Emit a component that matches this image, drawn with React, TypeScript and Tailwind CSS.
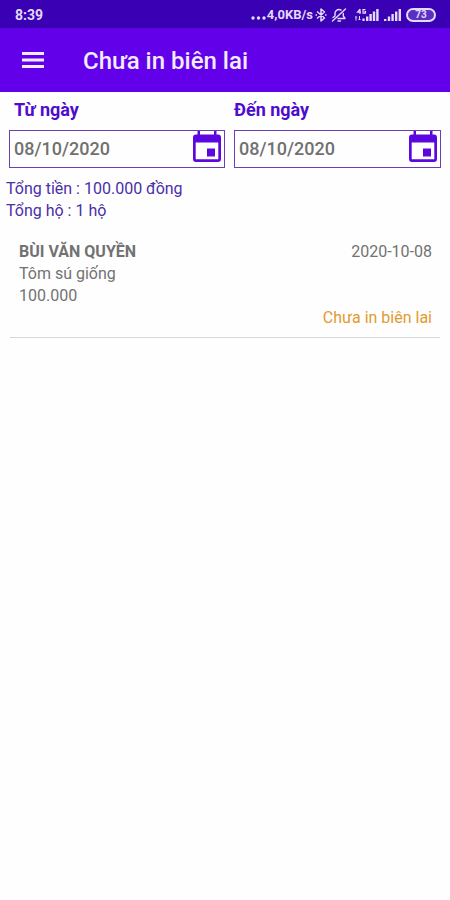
import React, { useState } from 'react';

interface Receipt {
  id: number;
  name: string;
  product: string;
  amount: string;
  date: string;
  status: string;
}

const receipts: Receipt[] = [
  {
    id: 1,
    name: 'BÙI VĂN QUYỀN',
    product: 'Tôm sú giống',
    amount: '100.000',
    date: '2020-10-08',
    status: 'Chưa in biên lai',
  },
];

function MenuIcon() {
  return (
    <svg viewBox="0 0 22 17" className="w-[22px] h-[17px]" fill="currentColor" aria-hidden="true">
      <rect x="0" y="0" width="22" height="3" />
      <rect x="0" y="6.5" width="22" height="3" />
      <rect x="0" y="13" width="22" height="3" />
    </svg>
  );
}

function CalendarIcon() {
  return (
    <svg viewBox="0 0 28 32" className="w-7 h-8" fill="currentColor" aria-hidden="true">
      <path
        fillRule="evenodd"
        d="M4.5 0h2.500v3.500h14V0h2.500v3.500H25a3 3 0 0 1 3 3V28a3 3 0 0 1-3 3H3a3 3 0 0 1-3-3V6.500a3 3 0 0 1 3-3h1.500zM2.700 11.500V28.300h22.600V11.500z"
      />
      <rect x="14" y="17.500" width="8" height="8" />
    </svg>
  );
}

function BluetoothIcon() {
  return (
    <svg
      viewBox="0 0 16 16"
      className="w-4 h-4"
      fill="none"
      stroke="currentColor"
      strokeWidth="1.5"
      strokeLinejoin="round"
      aria-hidden="true"
    >
      <path d="M4 4.500l7.500 6.500L8 14V2l3.500 3L4 11.500" />
      <path d="M2.500 8h1.500M12 8h1.500" />
    </svg>
  );
}

function MutedBellIcon() {
  return (
    <svg
      viewBox="0 0 16 16"
      className="w-4 h-4"
      fill="none"
      stroke="currentColor"
      strokeWidth="1.4"
      strokeLinecap="round"
      strokeLinejoin="round"
      aria-hidden="true"
    >
      <path d="M2 10.500 4 9V6.500A4 4 0 0 1 8 2.500c.8 0 1.400.2 2 .5M12.300 6.500V9l1.700 2.500H7M7 14h2.500" />
      <path d="M1.500 14 14.500 2" />
    </svg>
  );
}

function SignalIcon() {
  return (
    <svg viewBox="0 0 18 14" className="w-[18px] h-3.5" fill="currentColor" aria-hidden="true">
      <rect x="0" y="11" width="2.4" height="2" />
      <rect x="3.8" y="8.5" width="2.4" height="4.5" />
      <rect x="7.4" y="6" width="2.4" height="7" />
      <rect x="11" y="3.5" width="2.4" height="9.5" />
      <rect x="14.6" y="1" width="2.4" height="12" />
    </svg>
  );
}

function DataSignalIcon() {
  return (
    <svg viewBox="0 0 25 14" className="w-[25px] h-3.5" fill="currentColor" aria-hidden="true">
      {/* 4G mark with the transfer arrows under it */}
      <path d="M5 1 2.500 4.200h3.500M5 1v5M10.500 1.600H8v3.600h2.500V3.600H9.400" fill="none" stroke="currentColor" strokeWidth="1.200" />
      <path d="M1 12.500V8.500M0 9.500l1-1 1 1M4.500 8v4M3.500 11l1 1 1-1" fill="none" stroke="currentColor" strokeWidth="1" />
      <rect x="7.4" y="10.5" width="2.2" height="2.5" />
      <rect x="11" y="8.5" width="2.4" height="4.5" />
      <rect x="14.4" y="6" width="2.4" height="7" />
      <rect x="17.8" y="3.5" width="2.4" height="9.5" />
      <rect x="21.2" y="1" width="2.4" height="12" />
    </svg>
  );
}

function StatusBar() {
  return (
    <div className="h-7 pt-px bg-[#3a00b3] text-[#e4dafa] flex items-center justify-between pl-[15px] pr-3.5">
      <span className="text-sm font-bold">8:39</span>
      <div className="flex items-center">
        <svg viewBox="0 0 16 4" className="w-4 h-1 mt-1.5" fill="currentColor" aria-hidden="true">
          <circle cx="2" cy="2" r="1.7" />
          <circle cx="7.5" cy="2" r="1.7" />
          <circle cx="13" cy="2" r="1.7" />
        </svg>
        <span className="text-[13px] font-bold">4,0KB/s</span>
        <BluetoothIcon />
        <span className="ml-0.5 mr-2">
          <MutedBellIcon />
        </span>
        <DataSignalIcon />
        <span className="ml-1">
          <SignalIcon />
        </span>
        <span className="ml-1 w-[30px] h-3.5 rounded-full border-2 border-current bg-[#5a30c4] flex items-center justify-center text-[10px] leading-none font-bold">
          73
        </span>
      </div>
    </div>
  );
}

interface DateFieldProps {
  id: string;
  label: string;
  value: string;
  onChange: (value: string) => void;
  labelClass?: string;
}

function DateField({ id, label, value, onChange, labelClass = '' }: DateFieldProps) {
  return (
    <div className="min-w-0">
      <label
        htmlFor={id}
        className={`block h-[38px] pt-1.5 text-lg leading-6 font-bold text-[#4f0ccf] ${labelClass}`}
      >
        {label}
      </label>
      <div className="h-[38px] border border-[#6a3fb8] flex items-start pr-[3px]">
        <input
          id={id}
          type="text"
          value={value}
          onChange={e => onChange(e.target.value)}
          className="flex-1 min-w-0 h-[34px] pl-1 text-lg font-medium text-[#707070] bg-transparent focus:outline-none"
        />
        <button type="button" aria-label={`Chọn ${label.toLowerCase()}`} className="shrink-0 text-[#5c06e0]">
          <CalendarIcon />
        </button>
      </div>
    </div>
  );
}

function ReceiptRow({ receipt }: { receipt: Receipt }) {
  return (
    <li className="border-b border-[#d8d8d8] pl-[9px] pr-2 pb-2 text-base leading-[22px] text-[#727272]">
      <div className="flex justify-between">
        <span className="font-bold">{receipt.name}</span>
        <span>{receipt.date}</span>
      </div>
      <p>{receipt.product}</p>
      <p>{receipt.amount}</p>
      <p className="text-right text-[#e29a30]">{receipt.status}</p>
    </li>
  );
}

export default function App() {
  const [fromDate, setFromDate] = useState('08/10/2020');
  const [toDate, setToDate] = useState('08/10/2020');

  return (
    <div className="min-h-screen bg-[#fefefe] font-[Roboto,sans-serif]">
      <StatusBar />
      <header className="h-16 bg-[#6200ea] text-[#f3ebff] flex items-center px-[22px]">
        <button type="button" aria-label="Menu">
          <MenuIcon />
        </button>
        <h1 className="ml-[39px] pt-0.5 text-2xl font-medium">Chưa in biên lai</h1>
      </header>

      <main>
        <div className="grid grid-cols-[216fr_207fr] gap-[9px] px-[9px]">
          <DateField id="from-date" label="Từ ngày" value={fromDate} onChange={setFromDate} labelClass="pl-[5px]" />
          <DateField id="to-date" label="Đến ngày" value={toDate} onChange={setToDate} />
        </div>

        <div className="mt-2.5 px-1.5 text-base leading-[22px] text-[#4a2fa8]">
          <p>Tổng tiền : 100.000 đồng</p>
          <p>Tổng hộ : 1 hộ</p>
        </div>

        <ul className="mt-[19px] px-2.5">
          {receipts.map(r => (
            <ReceiptRow key={r.id} receipt={r} />
          ))}
        </ul>
      </main>
    </div>
  );
}
